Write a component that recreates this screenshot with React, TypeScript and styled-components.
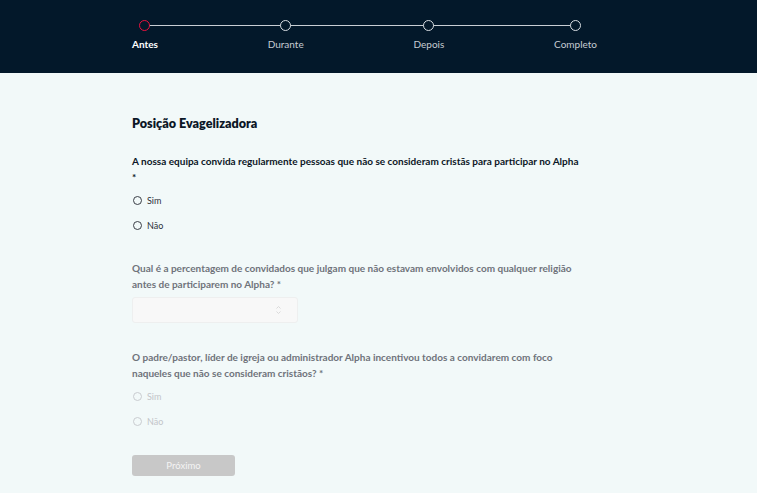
import React from 'react';
import styled, { createGlobalStyle } from 'styled-components';

const GlobalStyle = createGlobalStyle`
  html, body {
    margin: 0;
    padding: 0;
    background: #f2f9f9;
  }
  body {
    font-family: Lato, "Open Sans", sans-serif;
  }
`;

const Page = styled.div`
  min-height: 493px;
  background: #f2f9f9;
`;

const Header = styled.header`
  height: 73px;
  background: #03182a;
  padding-left: 132px;
  box-sizing: border-box;
`;

const Stepper = styled.div`
  width: 465px;
  padding-top: 20px;
  display: flex;
  justify-content: space-between;
  position: relative;
`;

const StepLine = styled.div`
  position: absolute;
  top: 25px;
  left: 14px;
  right: 22px;
  height: 1px;
  background: #c9ced4;
`;

const Step = styled.div`
  display: flex;
  flex-direction: column;
  align-items: center;
  position: relative;
  z-index: 1;
`;

const Dot = styled.span<{ $active?: boolean }>`
  width: 11px;
  height: 11px;
  box-sizing: border-box;
  border-radius: 50%;
  border: ${(p) => (p.$active ? '1.6px solid #e8123f' : '1px solid #d8dde2')};
  background: #03182a;
`;

const StepLabel = styled.span<{ $active?: boolean }>`
  margin-top: 7px;
  font-size: 10px;
  font-weight: ${(p) => (p.$active ? 700 : 400)};
  color: ${(p) => (p.$active ? '#ffffff' : '#c6ccd3')};
  line-height: 12px;
`;

const Main = styled.main`
  padding-left: 132px;
`;

const Form = styled.div`
  width: 466px;
  padding-top: 44px;
  display: flex;
  flex-direction: column;
`;

const Title = styled.h2`
  margin: 0 0 22px;
  font-size: 12.6px;
  font-weight: 800;
  color: #0b1626;
  line-height: 14px;
`;

const Question = styled.div<{ $gap?: number }>`
  display: flex;
  flex-direction: column;
  margin-bottom: ${(p) => p.$gap ?? 22}px;
`;

const Label = styled.p<{ $disabled?: boolean }>`
  margin: 0 0 3px;
  font-size: 10px;
  font-weight: 700;
  line-height: 16px;
  color: ${(p) => (p.$disabled ? '#6f737b' : '#0b1626')};
`;

const Option = styled.label<{ $disabled?: boolean }>`
  display: flex;
  align-items: center;
  gap: 5px;
  height: 25px;
  font-size: 9px;
  color: ${(p) => (p.$disabled ? '#c2c5c9' : '#2b313a')};
`;

const Radio = styled.span<{ $disabled?: boolean }>`
  width: 7px;
  height: 7px;
  margin-left: 1px;
  border-radius: 50%;
  border: 1.3px solid ${(p) => (p.$disabled ? '#c9ccd0' : '#3a3f47')};
`;

const NumberBox = styled.div`
  width: 166px;
  height: 26px;
  margin-top: 2px;
  border: 1px solid #eeefef;
  border-radius: 3px;
  background: #f8f8f8;
  display: flex;
  align-items: center;
  justify-content: flex-end;
  padding-right: 15px;
  box-sizing: border-box;
`;

const Button = styled.button`
  width: 103px;
  height: 21px;
  border: none;
  border-radius: 3px;
  background: #c8c8c8;
  color: #f4f4f4;
  font-family: inherit;
  font-size: 9.5px;
  padding: 0;
`;

const steps = ['Antes', 'Durante', 'Depois', 'Completo'];

function Spinner() {
  return (
    <svg width="7" height="10" viewBox="0 0 7 10">
      <path d="M1.5 3.5 L3.5 1.5 L5.5 3.5" fill="none" stroke="#d6d6d6" strokeWidth="0.9" />
      <path d="M1.5 6.5 L3.5 8.5 L5.5 6.5" fill="none" stroke="#d6d6d6" strokeWidth="0.9" />
    </svg>
  );
}

export default function App() {
  return (
    <Page>
      <GlobalStyle />
      <Header>
        <Stepper>
          <StepLine />
          {steps.map((s, i) => (
            <Step key={s}>
              <Dot $active={i === 0} />
              <StepLabel $active={i === 0}>{s}</StepLabel>
            </Step>
          ))}
        </Stepper>
      </Header>
      <Main>
        <Form>
          <Title>Posição Evagelizadora</Title>
          <Question>
            <Label>
              A nossa equipa convida regularmente pessoas que não se consideram cristãs para participar no Alpha
              <br />*
            </Label>
            <Option>
              <Radio />
              Sim
            </Option>
            <Option>
              <Radio />
              Não
            </Option>
          </Question>
          <Question $gap={26}>
            <Label $disabled>
              Qual é a percentagem de convidados que julgam que não estavam envolvidos com qualquer religião antes de
              participarem no Alpha? *
            </Label>
            <NumberBox>
              <Spinner />
            </NumberBox>
          </Question>
          <Question $gap={21}>
            <Label $disabled>
              O padre/pastor, líder de igreja ou administrador Alpha incentivou todos a convidarem com foco
              <br />
              naqueles que não se consideram cristãos? *
            </Label>
            <Option $disabled>
              <Radio $disabled />
              Sim
            </Option>
            <Option $disabled>
              <Radio $disabled />
              Não
            </Option>
          </Question>
          <Button>Próximo</Button>
        </Form>
      </Main>
    </Page>
  );
}
